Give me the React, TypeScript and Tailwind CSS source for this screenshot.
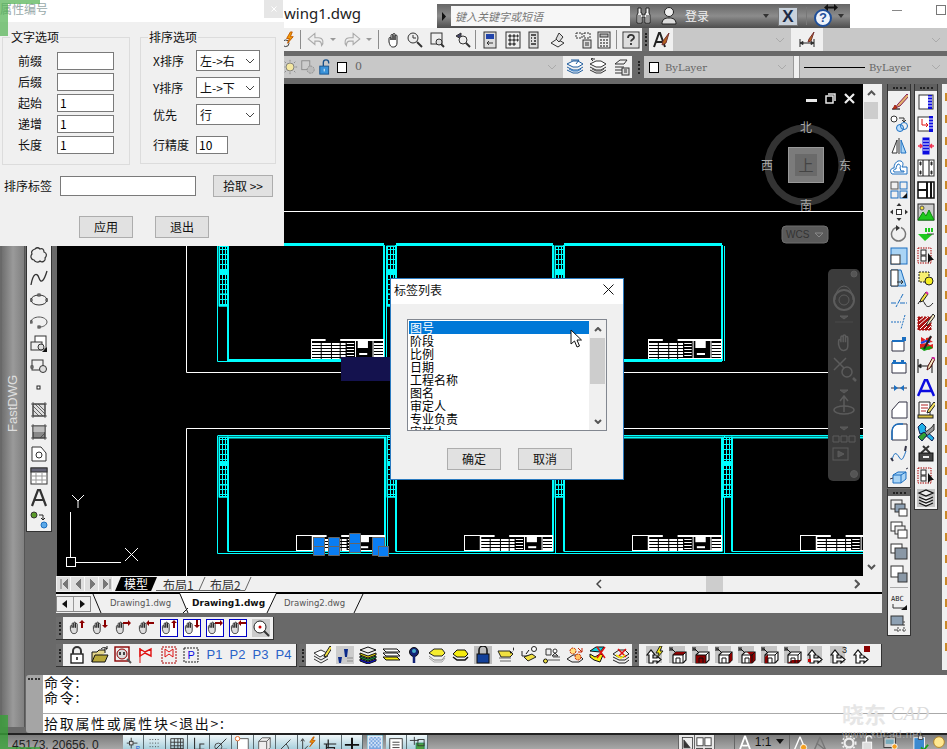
import React from 'react';

const CJK = '"Noto Sans CJK SC", sans-serif';

const hand = 'M4 11V7.5a1 1 0 0 1 2 0V9V4.5a1 1 0 0 1 2 0V9V3.5a1 1 0 0 1 2 0V9V5a1 1 0 0 1 2 0v7c0 2.500-1.500 4-3.500 4H8c-2 0-3-1-4-5z';
const arrows: Record<string, string> = { up: 'M13 9V4h-2l3-3 3 3h-2v5z', down: 'M13 1v5h-2l3 3 3-3h-2V1z', right: 'M9 3h5V1l3 3-3 3V5H9z', left: 'M17 3h-5V1L9 4l3 3V5h5z' };
const handArrow = (a: string, box = false) => (
  <>
    {box && <rect x=".5" y=".5" width="17" height="17" fill="#fff" stroke="#0000c8" />}
    <path d={hand} fill="#ddd" stroke="#222" transform="translate(-1 1) scale(.85)" />
    <path d={arrows[a]} fill="#8b0000" stroke="none" />
  </>
);
const layers = (a: string, b: string, c = '#333') => (
  <>
    <path d="M1 6l6-3h5l5 3-5 3H7z" fill={a} stroke={c} />
    <path d="M1 9l6 3h5l5-3M1 12l6 3h5l5-3" stroke={c} />
    <path d="M3 11l4 2h5l3-2" stroke={b} />
  </>
);
const cube = (patch: React.ReactNode) => (
  <>
    <rect x="0" y="0" width="16" height="17" fill="#c4c4c4" stroke="none" />
    <path d="M1 1v4M3 1v4M1 3h2M3 3l3 3" stroke="#111" />
    <path d="M4 17V9l3-3h10v8l-3 3z" fill="#fff" stroke="#111" strokeWidth="1.200" />
    {patch}
    <path d="M4 9h10v8M14 9l3-3M7 17v-5h4v5" stroke="#111" fill="none" />
  </>
);
const house = 'M3 17V9H1l4-5 4 5H7v3h4v-2l4 3.500-4 3.500v-2H7v2z';

const ICONS: Record<string, React.ReactNode> = {
  bolt: (<><circle cx="6" cy="13" r="3.500" /><path d="M11 1L7 8h3l-2 5 6-7h-3l2-5z" fill="#f59a00" stroke="#c15a00" /></>),
  undo: (<path d="M8 3L2 8l6 5v-3h3c2 0 3 1 3 4 2-2 2-7-3-7H8z" fill="#eee" stroke="#aaa" />),
  redo: (<path d="M10 3l6 5-6 5v-3H7c-2 0-3 1-3 4-2-2-2-7 3-7h3z" fill="#eee" stroke="#aaa" />),
  hand: (<path d={hand} fill="#fff" stroke="#222" />),
  zoom: (<><circle cx="7" cy="7" r="5" fill="#eee" /><path d="M7 4v3h3" /><path d="M11 11l5 5" strokeWidth="2" /></>),
  zwin: (<><rect x="2" y="2" width="11" height="11" stroke="#333" /><circle cx="10" cy="11" r="3" fill="#ddd" /><path d="M12 13l3 3" strokeWidth="2" /></>),
  zprev: (<><path d="M7 2L2 5l5 3z" fill="#446" /><circle cx="9" cy="9" r="4" fill="#eee" /><path d="M12 12l4 4" strokeWidth="2" /></>),
  prop: (<><rect x="3" y="1" width="12" height="16" fill="#ddd" /><rect x="5" y="3" width="8" height="5" fill="#24a" stroke="none" /><path d="M6 12h6M6 12l2-2M6 12l2 2" /></>),
  grid: (<><rect x="2" y="1" width="14" height="16" /><path d="M5 4h2v2H5zM9 4h2v2H9zM13 4h1v2h-1zM5 8h2v2H5zM9 8h2v2H9zM13 8h1v2h-1zM5 12h2v2H5zM9 12h2v2H9z" fill="#777" /></>),
  tools: (<><rect x="4" y="1" width="9" height="16" fill="#ddd" /><path d="M6 4h5M6 7h1M9 7h2M6 10h1M9 10h2M6 13h5" stroke="#555" strokeWidth="2" /></>),
  stamp: (<><path d="M2 12l6-4 7 4-6 4z" fill="#eee" /><path d="M7 8l3-6 4 4-4 5z" fill="#ddd" /></>),
  sheets: (<><rect x="2" y="2" width="6" height="5" strokeDasharray="2 1" /><rect x="10" y="2" width="6" height="5" strokeDasharray="2 1" /><rect x="9" y="9" width="8" height="8" fill="#ddd" /><path d="M11 12h4M11 14h4" /></>),
  calc: (<><rect x="3" y="1" width="12" height="16" fill="#eee" /><rect x="5" y="3" width="8" height="3" fill="#bbb" /><path d="M5 9h2M8 9h2M11 9h2M5 12h2M8 12h2M11 12h2M5 15h2M8 15h2M11 15h2" strokeWidth="1.500" stroke="#555" /></>),
  help: (<><rect x="1" y="1" width="16" height="16" fill="#fff" /><rect x="2" y="2" width="14" height="14" fill="#ddd" stroke="none" /><path d="M6 7c0-4 6-4 6-.500 0 2-3 2-3 4" strokeWidth="1.800" /><path d="M9 12v2" strokeWidth="1.800" /></>),
  abrush: (<><path d="M2 16L7 2h1l5 14M4 11h7" strokeWidth="2" stroke="#222" /><path d="M17 2l-6 8-1 4 4-2z" fill="#b5651d" stroke="#733" /></>),
  dimbrush: (<><path d="M2 8v8M16 8v8M2 12h14" stroke="#222" /><path d="M2 12l3-1.500v3zM16 12l-3-1.500v3z" fill="#222" /><path d="M16 1l-5 7-1 3 3-1z" fill="#b5651d" stroke="#733" /></>),
  sun: (<><circle cx="9" cy="9" r="4.500" fill="#f4e7a0" stroke="#777" /><path d="M9 1v2M9 15v2M1 9h2M15 9h2M3 3l1.500 1.500M15 3l-1.500 1.500M3 15l1.500-1.500M15 15l-1.500-1.500" stroke="#888" /></>),
  freeze: (<><rect x="2" y="2" width="9" height="10" fill="#ccc" stroke="#888" /><circle cx="12" cy="12" r="4" fill="#bbb" stroke="#888" strokeDasharray="2 1" /></>),
  unlock: (<><rect x="2" y="8" width="10" height="9" fill="#3a92d8" stroke="#15508a" /><path d="M6 8V4a3 3 0 0 1 6 0v1" stroke="#15508a" strokeWidth="1.500" /><path d="M7 11v3" stroke="#fff" /></>),
  lay1: (<>{layers('#fff', '#2a78c8', '#1c5a9c')}<path d="M5 2h8l-3 4" stroke="#1c5a9c" /></>),
  lay2: (<>{layers('#fff', '#555')}<path d="M2 1h4M2 1l2-1M2 1l2 2" /></>),
  lay3: (<><path d="M3 6l5-4h7l-3 4zM3 9h9M3 12h9M3 15h9" /><rect x="10" y="10" width="7" height="7" fill="#ddd" /><path d="M12 12h3M12 14h3" /></>),
  brush: (<><path d="M2 16h8" stroke="#444" strokeWidth="1.500" /><path d="M17 1l-9 10-3 4 5-2 9-10z" fill="#e3b26b" stroke="#825" /><path d="M5 12l-2 4 4-1z" fill="#c63d00" stroke="#922" /></>),
  copy: (<><circle cx="4" cy="4" r="3" fill="#fff" stroke="#333" /><circle cx="10" cy="13" r="3.500" fill="#bfe0ff" stroke="#1c6fc0" /><circle cx="14" cy="11" r="3.500" stroke="#1c6fc0" /><path d="M9 3h5v4M12 5l2 2 2-2" stroke="#333" /></>),
  mirror: (<><path d="M7 3L2 16h5z" fill="#fff" /><path d="M11 3l5 13h-5z" fill="#a9d4f5" stroke="#1c6fc0" /><path d="M9 1v16" /></>),
  offset: (<path d="M8 2c5-1 6 3 4 6h5v7H2c-3-3-1-6 2-6 0-4 2-6 4-7zM8 5c2 0 3 2 2 4l1 3h3v1H4c-1-2 0-3 2-3 0-2 1-4 2-5z" stroke="#1c6fc0" fill="#fff" />),
  array: (<><rect x="1" y="1" width="7" height="7" stroke="#555" /><rect x="10" y="1" width="7" height="7" stroke="#1c6fc0" /><rect x="1" y="10" width="7" height="7" stroke="#1c6fc0" /><rect x="10" y="10" width="7" height="7" stroke="#1c6fc0" /><path d="M12 17l5-5v5z" fill="#111" stroke="none" /></>),
  move: (<><rect x="6.500" y="6.500" width="5" height="5" fill="#fff" /><path d="M9 0l2.500 3h-5zM9 18l2.500-3h-5zM0 9l3-2.500v5zM18 9l-3-2.500v5z" fill="#333" stroke="none" /></>),
  rotate: (<><path d="M11 2.500a7 7 0 1 1-5 0" stroke="#777" strokeWidth="1.500" /><path d="M6 0l4 3-4 3z" fill="#333" stroke="none" /></>),
  scale: (<><rect x="1" y="1" width="16" height="16" fill="#a9d4f5" stroke="#1c6fc0" /><rect x="1" y="8" width="9" height="9" fill="#fff" stroke="#333" /></>),
  stretch: (<><path d="M1 1h10l5 16H1z" fill="#a9d4f5" stroke="#1c6fc0" /><path d="M1 1h7v16H1z" fill="#fff" stroke="#333" /><path d="M7 13h6M11 11l2 2-2 2" /></>),
  trim: (<path d="M1 12h5M10 12h7M13 3L6 16" stroke="#1c6fc0" strokeDasharray="5 1" />),
  extend: (<path d="M1 9h10M15 2l-4 14" stroke="#1c6fc0" strokeDasharray="2 1" />),
  brk1: (<><path d="M2 6h12v10H2z" fill="#fff" stroke="#334" /><path d="M2 6h12" stroke="#1c6fc0" strokeWidth="2" /><rect x="12" y="2" width="4" height="4" fill="#1c6fc0" stroke="none" /></>),
  brk2: (<><path d="M2 6h14v10H2z" fill="#fff" stroke="#334" /><path d="M2 6h14" stroke="#1c6fc0" strokeWidth="2" /><rect x="3" y="3" width="3" height="3" fill="#1c6fc0" stroke="none" /><rect x="11" y="3" width="3" height="3" fill="#1c6fc0" stroke="none" /></>),
  join: (<><path d="M1 9h16" stroke="#334" /><path d="M4 6l4 3-4 3zM14 6l-4 3 4 3z" fill="#1c6fc0" stroke="none" /></>),
  chamfer: (<path d="M2 17V9l7-8h8v16z" fill="#fff" stroke="#334" />),
  fillet: (<><path d="M2 17V9c0-5 3-8 7-8h8v16z" fill="#fff" stroke="#334" /><path d="M2 17V9c0-5 3-8 7-8h4" stroke="#1c6fc0" strokeWidth="1.500" /></>),
  blend: (<><path d="M2 15c2-8 4-8 7-3s4 2 7-6" stroke="#1c6fc0" /><path d="M1 13l2 3M16 1l-1 5" stroke="#334" strokeWidth="2" /></>),
  explode: (<><path d="M3 8l5-3h8v7l-5 4H3z" fill="#a9d4f5" stroke="#1c6fc0" /><path d="M3 8h8v8M11 8l5-3" stroke="#1c6fc0" /><path d="M0 12l3-1M16 2l2-1" stroke="#334" /></>),
  ovl1: (<><rect x="1" y="1" width="11" height="9" fill="#eee" /><rect x="5" y="5" width="10" height="8" fill="#8da0b3" /><rect x="9" y="10" width="8" height="7" fill="#fff" /></>),
  ovl2: (<><rect x="1" y="1" width="11" height="9" fill="#fff" /><rect x="5" y="5" width="10" height="8" fill="#eee" /><rect x="8" y="9" width="9" height="8" fill="#fff" /></>),
  ovl3: (<><rect x="1" y="1" width="11" height="9" fill="#fff" /><rect x="5" y="5" width="12" height="11" fill="#8a98a6" /></>),
  ovl4: (<><rect x="1" y="1" width="12" height="11" fill="#fff" /><rect x="8" y="8" width="9" height="9" fill="#8a98a6" /></>),
  abc: (<><text x="1" y="8" fontFamily="DejaVu Sans Mono" fontSize="7" fill="#222" stroke="none">ABC</text><path d="M3 11v4h11" /><path d="M11 17l6-5v5z" fill="#111" stroke="none" /></>),
  wipe: (<><rect x="1" y="1" width="12" height="9" fill="#8da0b3" /><path d="M6 15h10M14 6v11M8 12v5M4 15h3" stroke="#444" strokeDasharray="2 1" /></>),
  side: (<><rect x="2" y="2" width="14" height="14" fill="#fff" /><rect x="11" y="2" width="4" height="14" fill="#0b0be0" stroke="none" /><path d="M11 4h4M11 7h4M11 10h4M11 13h4" stroke="#fff" /></>),
  side2: (<><rect x="1" y="2" width="12" height="14" fill="#fff" /><rect x="12" y="1" width="4" height="16" fill="#0b0be0" stroke="none" /><path d="M12 4h4M12 7h4M12 10h4M12 13h4" stroke="#fff" /><path d="M5 4v6h6M9 8l2 2-2 2" stroke="#e01010" /></>),
  split: (<><rect x="6" y="1" width="6" height="16" fill="#0b0be0" stroke="#0b0be0" /><path d="M6 4h6M6 7h6M6 10h6M6 13h6" stroke="#fff" /><path d="M1 9h4M3 7l2 2-2 2M17 9h-4M15 7l-2 2 2 2" stroke="#f03050" strokeWidth="1.500" /></>),
  frame: (<><rect x="1" y="1" width="16" height="16" fill="#fff" /><path d="M6 1v16M12 1v16" stroke="#111" /><path d="M3 3h1v3H3zM14 3h1v3h-1zM3 12h1v3H3zM14 12h1v3h-1z" fill="#111" /></>),
  table: (<><rect x="1" y="1" width="16" height="16" fill="#fff" strokeWidth="1.500" stroke="#111" /><path d="M1 9h9M10 1v16M14 1v16" strokeWidth="2" stroke="#111" /></>),
  image: (<><rect x="1" y="1" width="16" height="16" fill="#ccc" stroke="#222" /><path d="M1 17l5-8 3 4 3-6 5 10z" fill="#1ec81e" stroke="#0a8a0a" /><circle cx="5" cy="5" r="2" fill="#f5e040" stroke="#555" /></>),
  greenv: (<><path d="M1 9h15L8 16z" fill="#1ec81e" stroke="none" /><path d="M9 3v4M12 3v4M15 3v4" stroke="#1ec81e" strokeWidth="2" /><path d="M10 9h7" stroke="#444" /></>),
  select: (<><rect x="1" y="1" width="13" height="15" strokeDasharray="1.500 1" stroke="#a00" /><rect x="4" y="3" width="5" height="5" fill="#fff" stroke="#222" /><rect x="4" y="9" width="5" height="5" fill="#fff" stroke="#222" /><path d="M11 6v10l3-3h3z" fill="#111" stroke="none" /></>),
  hatchc: (<><rect x="2" y="3" width="10" height="10" fill="#f6ee70" stroke="#222" strokeDasharray="2 1" /><circle cx="12" cy="12" r="4" fill="#f6ee20" stroke="#222" /></>),
  pencurve: (<><path d="M1 13c3-6 5-4 7 0s5 3 8-1" stroke="#222" /><path d="M9 1L4 8l-1 3 3-1 5-7z" fill="#f4e040" stroke="#222" /><path d="M9 1l2 2" stroke="#e020a0" strokeWidth="2" /></>),
  hatchp: (<><rect x="1" y="4" width="13" height="13" fill="#a11" stroke="#a11" strokeDasharray="2 1" /><path d="M2 8l5-4M2 12l9-8M3 16l11-11M7 16l7-7M11 16l3-3" stroke="#fff" /><path d="M16 1l-6 9v3l2-2 6-8z" fill="#f4e7c0" stroke="#222" /></>),
  flagc: (<><path d="M4 2l5 3-5 2zM9 3l6-1-2 3 3 2-7 1zM3 9l7-1 3 2 3-1v4l-4 2-5-2-4 1z" fill="#e02020" stroke="none" /><path d="M3 13l10-2 3 2-9 3z" fill="#10a010" stroke="none" /><path d="M4 8l5-2 4 1" stroke="#2040e0" strokeWidth="2" /><path d="M14 1L7 14" stroke="#222" strokeWidth="2" /></>),
  dimp: (<><path d="M1 2v14M15 2v14M1 9h14" stroke="#111" /><path d="M1 9l3-2v4zM15 9l-3-2v4z" fill="#111" /><path d="M16 0l-5 9-1 4 3-2 5-9z" fill="#f4e7c0" stroke="#511" /><path d="M15 0l3 2" stroke="#d020a0" strokeWidth="2" /></>),
  bigA: (<path d="M1 17L8 1h2l7 16M4 12h10" stroke="#0b0be0" strokeWidth="2.500" />),
  notes: (<><path d="M2 1h11v14H2z" fill="#fff" stroke="#222" /><path d="M4 4h7M4 7h7M4 10h5" stroke="#b02020" /><path d="M17 1l-6 8-1 3 3-1 6-8z" fill="#f4e060" stroke="#222" /><rect x="1" y="14" width="15" height="3" fill="#d8c040" stroke="#222" /></>),
  wrench: (<><path d="M1 4l4-4 4 4-1 3 9 8-2 3-9-8-3 1z" fill="#20b0e8" stroke="#125" /><path d="M17 1l-2 3-10 8 2 3 10-8z" fill="#999" stroke="#333" /><path d="M1 14l6-5 3 3-5 6z" fill="#30a030" stroke="#125" /></>),
  kit: (<><path d="M4 8l8-7M13 8L6 1" stroke="#333" strokeWidth="2" /><rect x="2" y="8" width="14" height="8" fill="#444" stroke="#111" /><rect x="6" y="11" width="6" height="2" fill="#eee" stroke="none" /></>),
  stack: (<><rect x="0" y="0" width="18" height="18" fill="#c4c4c4" stroke="none" /><path d="M2 4l7-3 7 3-7 3zM2 8l7 3 7-3M2 11l7 3 7-3M2 14l7 3 7-3" fill="#eee" stroke="#111" strokeWidth="1.300" /></>),
  lock: (<><rect x="3" y="8" width="12" height="9" fill="#fff" stroke="#111" strokeWidth="1.300" /><path d="M5 8V5a4 4 0 0 1 8 0v3" strokeWidth="2" /><path d="M9 11v3" stroke="#111" strokeWidth="1.500" /></>),
  folder: (<><path d="M1 16V6h5l2-2h6v3" fill="#e3d58a" stroke="#111" /><path d="M1 16l3-7h13l-3 7z" fill="#b8a83a" stroke="#111" /><path d="M10 3c2-2 5-2 6 0M16 0v3h-3" stroke="#111" /></>),
  camera: (<><rect x="1" y="1" width="14" height="14" fill="#eee" stroke="#8b0000" strokeWidth="1.400" /><circle cx="8" cy="8" r="5" fill="#ddd" stroke="#8b0000" /><path d="M6 6v3M10 6v3" stroke="#111" strokeWidth="1.500" /><path d="M13 13l4 4" stroke="#555" strokeWidth="2" /></>),
  flag1: (<><path d="M3 17V2" stroke="#e01010" /><path d="M3 3l5 3 6-3v7l-6-3-5 3z" fill="none" stroke="#e01010" strokeWidth="1.400" /></>),
  flag2: (<><rect x="2" y="1" width="14" height="16" strokeDasharray="2 1" stroke="#a00" /><path d="M5 3l4 3 4-3v8l-4-3-4 3z" stroke="#e01010" /></>),
  ptbox: (<><rect x="1" y="2" width="14" height="14" strokeDasharray="2 1" stroke="#222" /><text x="4.500" y="13" fontFamily="Liberation Sans" fontSize="11" fill="#0b0be0" stroke="none">P</text></>),
  zoompt: (<><rect x="0" y="0" width="18" height="18" fill="#ccc" stroke="none" /><circle cx="8" cy="8" r="6" fill="#fff" stroke="#222" /><circle cx="8" cy="8" r="1.500" fill="#c00" stroke="none" /><path d="M12 12l5 5" strokeWidth="2" /></>),
  note: (<><path d="M1 7l7-3 6 3-7 4z" fill="#fff" /><path d="M1 10l7 4 7-4M1 13l7 4 7-4" /><path d="M17 0l-5 8-1 3 3-1 5-8z" fill="#f2e040" stroke="#222" /></>),
  walk: (<><rect x="0" y="0" width="18" height="18" fill="#ccc" stroke="none" /><path d="M2 11h4l-1 6H3zM8 3h4l-1 8H9z" fill="#0b2a8a" stroke="none" /><path d="M11 12h6M11 15h6" stroke="#888" /></>),
  rainbow: (<><path d="M1 4l8-3 8 3-8 3z" fill="#eee" stroke="#111" /><path d="M1 7l8 3 8-3v2l-8 3-8-3z" fill="#e6d500" stroke="#111" /><path d="M1 10l8 3 8-3v2l-8 3-8-3z" fill="#10a040" stroke="#111" /><path d="M1 13l8 3 8-3v2l-8 3-8-3z" fill="#0b0be0" stroke="#111" /></>),
  yel: (<><path d="M1 3h14l3 3H4zM1 7h14l3 3H4z" fill="#fff" stroke="#111" /><path d="M1 11h14l3 3H4z" fill="#f5ec10" stroke="#111" /></>),
  bulb: (<><circle cx="9" cy="6" r="4.500" fill="#127" stroke="#111" /><path d="M9 10v7" stroke="#127" strokeWidth="2.500" /><circle cx="9" cy="5" r="2" fill="#4ac" stroke="none" /></>),
  yel2: (<><path d="M1 7l5-4h8l3 4-3 3H6z" fill="#f5ec30" stroke="#222" /><path d="M1 10l5 4h8l3-4" stroke="#888" /><path d="M1 12l5 4h8l3-4" stroke="#aaa" /></>),
  yel3: (<><path d="M2 8l4-4h8l3 4-3 3H6z" fill="#f5ec10" stroke="#111" /><path d="M2 11l4 3h8l3-3" stroke="#111" strokeWidth="1.500" /></>),
  laylock: (<><rect x="0" y="0" width="18" height="18" fill="#bdbdbd" stroke="none" /><rect x="3" y="8" width="12" height="9" fill="#12409a" stroke="#111" /><path d="M5 8V4a4 4 0 0 1 8 0v4" stroke="#111" strokeWidth="1.500" /></>),
  laypen: (<><path d="M1 5h12l3 3-3 3H4z" fill="#f0e040" stroke="#222" /><path d="M2 12h12M3 15h11" stroke="#666" /><path d="M16 1a2 2 0 1 1-4 4l2 3 2-3z" fill="#111" stroke="none" /></>),
  layswap: (<><path d="M2 5v5h10" stroke="#222" /><path d="M4 11l8-3 4 3-8 4z" fill="#f0e040" stroke="#222" /><circle cx="14" cy="3" r="2.500" fill="#fff" stroke="#222" /><path d="M9 4l-3 4" stroke="#111" /></>),
  layp: (<><path d="M3 3h5v6H3z" fill="none" /><circle cx="2.500" cy="15" r="2" fill="#f0e040" stroke="#111" /><path d="M5 14h12M10 11h7" stroke="#555" /><circle cx="12" cy="5" r="2" fill="#fff" stroke="#333" /><path d="M9 10l3-3 3 3z" fill="#ccc" /></>),
  laysun: (<><path d="M1 13l6-4h6l4 4-4 3H6z" fill="#eee" stroke="#222" /><circle cx="7" cy="5" r="3" fill="#ffe080" stroke="#c02000" strokeDasharray="2 1" /><circle cx="12" cy="11" r="3" fill="#ffc060" stroke="#c02000" strokeDasharray="2 1" /><path d="M12 2l4 4M16 2v4h-4" stroke="#c02000" /></>),
  layx: (<><path d="M1 5l6-4h8L11 6z" fill="#10d0e0" stroke="#111" /><path d="M1 8l5 3 5-3 3 1-3 7-6-2-4-3z" fill="#f5ec10" stroke="#111" /><path d="M8 1l8 11M16 1L8 12" stroke="#e01010" strokeWidth="1.500" /></>),
  layx2: (<><path d="M1 8l6-4h6l4 4-5 3H6zM1 11l6 3h6l4-3M1 14l6 3h6l4-3" fill="#eee" stroke="#222" /><path d="M6 3l8 8M14 3l-8 8" stroke="#e01010" strokeWidth="1.500" /><path d="M4 9l5 3 4-3" stroke="#f5ec10" strokeWidth="1.500" /></>),
  bq: (<><rect x="0" y="0" width="16" height="17" fill="#c4c4c4" stroke="none" /><path d={house} fill="#fff" stroke="#111" strokeWidth="1.200" /><path d="M14 0l-4 7h3l-2 5 6-7h-3l2-5z" fill="#f5ec10" stroke="#222" /></>),
  b1: cube(<path d="M4 9l3-3h10l-3 3z" fill="#8b0000" stroke="none" />),
  b2: cube(<rect x="4" y="9" width="10" height="8" fill="#8b0000" stroke="none" />),
  b3: cube(<path d="M14 9l3-3v8l-3 3z" fill="#8b0000" stroke="none" />),
  b4: cube(<path d="M9 6h8v8l-3 3h-2V9z" fill="#8b0000" stroke="none" />),
  b5: cube(<path d="M4 17v-6l3-3v9z" fill="#8b0000" stroke="none" />),
  b6: cube(<path d="M4 17h10l3-3H8z" fill="#8b0000" stroke="none" />),
  b7: (<><rect x="0" y="0" width="15" height="17" fill="#c4c4c4" stroke="none" /><path d={house} fill="#fff" stroke="#111" strokeWidth="1.200" /><rect x="1" y="13" width="3" height="3" fill="#c00" stroke="none" /></>),
  b8: (<><rect x="0" y="0" width="15" height="17" fill="#c4c4c4" stroke="none" /><path d={house} fill="#fff" stroke="#111" strokeWidth="1.200" /><text x="12" y="7" fontFamily="Liberation Sans" fontSize="9" fill="#111" stroke="none">3</text></>),
  b9: (<><path d={house} fill="#fff" stroke="#111" strokeWidth="1.200" /><rect x="11" y="0" width="6" height="6" fill="#8b0000" stroke="none" /></>),
  cloud: (<path d="M5 2c2-2 4-1 5 0 2-1 4 0 4 3 3 1 3 4 1 6 1 3-3 5-5 3-2 2-5 1-6-1-3 0-4-4-2-6-1-2 0-4 3-5z" fill="#eee" stroke="#333" strokeWidth="1.200" />),
  spline: (<path d="M1 16C3 4 7 3 9 9s5 3 8-7" stroke="#333" strokeWidth="1.300" />),
  ellipse: (<><ellipse cx="9" cy="9" rx="8" ry="5" /><rect x="0" y="8" width="2" height="2" fill="#fff" /><rect x="8" y="3" width="2" height="2" fill="#fff" /><rect x="16" y="8" width="2" height="2" fill="#fff" /></>),
  earc: (<><path d="M1 9c0-3 4-5 8-5s8 2 8 5-4 5-7 5" stroke="#555" /><rect x="0" y="8" width="2" height="2" fill="#fff" /><rect x="8" y="13" width="2" height="2" fill="#fff" /></>),
  block: (<><rect x="5" y="1" width="11" height="13" fill="#fff" /><rect x="1" y="7" width="11" height="8" fill="#eee" /><circle cx="11" cy="12" r="3" fill="#ddd" /><path d="M12 17l5-5v5z" fill="#111" stroke="none" /></>),
  rcirc: (<><rect x="2" y="3" width="11" height="10" /><circle cx="13" cy="12" r="3.500" fill="#ddd" /><rect x="1" y="9" width="2" height="2" fill="#fff" /></>),
  point: (<rect x="7" y="7" width="3" height="3" fill="#fff" stroke="#222" />),
  hatch: (<><rect x="3" y="3" width="12" height="12" fill="#ddd" /><path d="M5 3l10 10M3 5l10 10M8 3l7 7M3 9l6 6M1 3h16M1 15h16M3 1v16M15 1v16" stroke="#444" strokeWidth=".8" /></>),
  gradient: (<><rect x="3" y="3" width="12" height="12" fill="#888" /><rect x="3" y="3" width="12" height="6" fill="#bbb" stroke="none" /><path d="M1 3h16M1 15h16M3 1v16M15 1v16M10 15l5-5" stroke="#444" strokeWidth=".8" /></>),
  region: (<><path d="M2 2h9l5 6v8H2z" fill="#fff" /><circle cx="9" cy="10" r="3" /></>),
  tbl: (<><rect x="1" y="1" width="16" height="16" fill="#fff" /><rect x="1" y="1" width="16" height="4" fill="#667" /><path d="M1 9h16M1 13h16M6 5v12M12 5v12" stroke="#999" /></>),
  A: (<path d="M2 17L8 1h2l6 16M5 11h8" stroke="#333" strokeWidth="2.200" />),
  addsel: (<><circle cx="4" cy="4" r="3" fill="#5a9a2a" stroke="#333" /><circle cx="14" cy="14" r="3" fill="#5aa8e8" stroke="#1c6fc0" /><path d="M9 4h4v5M11 7l2 2 2-2" stroke="#222" /></>),
  snap: (<><path d="M2 8h12M7 2v12" stroke="#333" /><rect x="5" y="6" width="4" height="4" fill="#ddd" stroke="#333" /><text x="12" y="16" fontFamily="Liberation Sans" fontSize="7" fill="#15c" stroke="none">P</text></>),
  dots: (<path d="M3 4h12M3 8h12M3 12h12M3 16h12" stroke="#333" strokeDasharray="1 2" />),
  sgrid: (<path d="M2 3h14v14H2zM2 7h14M2 11h14M2 14h14M6 3v14M10 3v14M13 3v14" stroke="#333" />),
  ortho: (<path d="M4 2v13h11M10 15V9h5" stroke="#333" strokeWidth="1.200" />),
  polar: (<><circle cx="6" cy="12" r="4" stroke="#444" /><path d="M3 15L15 3M3 15h13" stroke="#222" /></>),
  osnap: (<><rect x="4" y="3" width="12" height="14" fill="#fff" stroke="#555" /><circle cx="4" cy="3" r="2.500" fill="#fff" stroke="#e06020" /></>),
  cube: (<><path d="M3 6l4-4h9v11l-4 4H3z" fill="#eee" stroke="#555" /><path d="M3 6h9v11M12 6l4-4" stroke="#555" /></>),
  angle: (<path d="M2 16L14 4M2 16h14M9 9c2 2 3 4 3 7" stroke="#333" />),
  dyn: (<><path d="M3 17V4M1 6l2-3 2 3M3 17l6-6" stroke="#333" /><path d="M15 1l-4 6h3l-3 5 6-7h-3l2-4z" fill="#f59a00" stroke="#c15a00" /></>),
  tplus: (<path d="M2 9h14M5 9v7h9v-3H5M7 4v10" stroke="#222" strokeWidth="1.400" />),
  plus: (<path d="M1 10h16M9 2v15" stroke="#111" strokeWidth="2.200" />),
  check: (<><rect x="0" y="0" width="18" height="18" fill="#fff" stroke="#28a" /><rect x="2" y="2" width="14" height="14" fill="#7aa7e0" stroke="none" /><path d="M2 2h2v2H2zM6 2h2v2H6zM10 2h2v2h-2zM14 2h2v2h-2zM4 4h2v2H4zM8 4h2v2H8zM12 4h2v2h-2zM2 6h2v2H2zM6 6h2v2H6zM10 6h2v2h-2zM14 6h2v2h-2zM4 8h2v2H4zM8 8h2v2H8zM12 8h2v2h-2zM2 10h2v2H2zM6 10h2v2H6zM10 10h2v2h-2zM14 10h2v2h-2zM4 12h2v2H4zM8 12h2v2H8zM12 12h2v2h-2z" fill="#cfe0f5" stroke="none" /></>),
  sheet: (<><rect x="2" y="3" width="14" height="14" fill="#fff" stroke="#333" /><path d="M5 7h8M5 10h8M5 13h8" stroke="#333" /></>),
  plusg: (<><path d="M6 1v9M1 5h10" stroke="#333" /><rect x="8" y="8" width="9" height="9" fill="#4aa040" stroke="#285" /><rect x="10" y="4" width="7" height="7" stroke="#333" /></>),
  paper: (<><rect x="3" y="2" width="13" height="15" fill="#eee" stroke="#333" /><path d="M5 5l8 10H5z" fill="#333" stroke="#333" /></>),
  view2: (<><rect x="1" y="2" width="7" height="9" fill="#fff" stroke="#333" /><rect x="10" y="2" width="7" height="9" fill="#fff" stroke="#333" /><path d="M0 14h8M10 14h8" stroke="#333" /></>),
  anno: (<path d="M9 1L3 17M9 1l6 16M6 12h6" stroke="#fff" strokeWidth="2" />),
  anno2: (<><path d="M9 2L3 16M9 2l6 14" stroke="#fff" strokeWidth="1.600" /><circle cx="13" cy="14" r="3.500" fill="#f5a020" stroke="#fff" /></>),
  anno3: (<path d="M9 2L3 16M9 2l6 14M5 9l9 7" stroke="#777" strokeWidth="1.600" />),
  gear: (<><circle cx="9" cy="9" r="5" fill="none" stroke="#eee" strokeWidth="2.500" /><circle cx="9" cy="9" r="7.500" stroke="#eee" strokeDasharray="2 2.500" strokeWidth="2" /></>),
  lock2: (<><rect x="2" y="8" width="10" height="9" fill="#ddd" stroke="#fff" /><path d="M6 8V4a3 3 0 0 1 6 0" stroke="#fff" strokeWidth="1.600" /></>),
  hw: (<><rect x="1" y="3" width="13" height="11" fill="#ccc" stroke="#333" /><rect x="3" y="5" width="9" height="5" fill="#7ab" stroke="none" /><circle cx="13" cy="13" r="3" fill="#f5a020" stroke="#fff" /></>),
  iso: (<><rect x="1" y="3" width="12" height="14" fill="#3a8ad0" stroke="#fff" /><path d="M6 1h5v4H6z" fill="#eee" /><path d="M9 14l3 3 5-6" stroke="#18a018" strokeWidth="2" /></>),
  bulby: (<circle cx="9" cy="8" r="6" fill="#ffe890" stroke="#b08020" />),
};

function Ico({ n, size = 18 }: { n: string; size?: number }) {
  return (
    <svg width={size} height={size} viewBox="0 0 18 18" fill="none" stroke="#333" className="block shrink-0">
      {ICONS[n]}
    </svg>
  );
}

function Chevron({ color = '#aaa' }: { color?: string }) {
  return (
    <svg width="10" height="6" viewBox="0 0 10 6" fill="none" stroke={color} strokeWidth="1" className="shrink-0">
      <path d="M1 1l4 4 4-4" />
    </svg>
  );
}

function Sep() {
  return <div className="w-px h-[19px] bg-[#8c8c8c] mx-[3px] shrink-0" />;
}

function Handle() {
  return (
    <div className="w-[7px] h-full bg-[#6e6e6e] flex items-center justify-center shrink-0">
      <div className="w-[2px] h-[13px] border-l-2 border-dotted border-[#222]" />
    </div>
  );
}

function Drop({ className, children }: { className: string; children?: React.ReactNode }) {
  return (
    <div className={`h-full bg-[#c8c8c8] flex items-center pr-[6px] ${className}`}>
      <div className="flex-1 flex items-center min-w-0">{children}</div>
      <Chevron />
    </div>
  );
}

function TitleBar() {
  return (
    <div className="h-[28px] bg-white flex items-start shrink-0 pl-[284px]">
      <div className="w-[153px] pt-[3px] text-[15px] leading-[20px] text-[#222] [font-family:'Noto_Sans',sans-serif]">wing1.dwg</div>
      <div className="relative mt-[4px] w-[413px] h-[24px] bg-gradient-to-b from-[#666666] via-[#8c8c8c] to-[#4e4e4e] flex items-center text-[#eee]">
        <div className="w-[14px] flex justify-center">
          <svg width="6" height="9" viewBox="0 0 6 9"><path d="M1 0l4 4.500-4 4.500z" fill="#111" /></svg>
        </div>
        <div className="w-[179px] h-[20px] bg-[#f7f7f7] pl-[4px] text-[#777] italic text-[11px] leading-[20px] [font-family:'Noto_Sans_CJK_SC',sans-serif]">键入关键字或短语</div>
        <div className="ml-[5px] w-[16px]">
          <svg width="17" height="18" viewBox="0 0 17 18"><path d="M3 1h3v5h1v2h3V6h1V1h3v5l1 2v8h-5V10H7v6H2V8l1-2z" fill="#eee" stroke="#222" /><path d="M3 8h3v7H3zM11 8h3v7h-3z" fill="#999" /></svg>
        </div>
        <div className="ml-[9px] w-[16px]">
          <svg width="18" height="20" viewBox="0 0 18 20"><circle cx="9" cy="6" r="4.500" fill="#eee" stroke="#222" /><path d="M2 18c0-5 3-6 7-6s7 1 7 6z" fill="#ddd" stroke="#222" /></svg>
        </div>
        <div className="ml-[9px] w-[78px] text-[12px] [font-family:'Noto_Sans_CJK_SC',sans-serif]">登录</div>
        <svg width="6" height="4" viewBox="0 0 6 4"><path d="M0 0h6L3 4z" fill="#333" /></svg>
        <div className="ml-[9px] w-[20px] h-[19px] bg-[#c9d2dc] border border-[#777] text-[#1c2a44] text-[17px] leading-[17px] font-bold text-center [font-family:'Liberation_Sans',sans-serif]">X</div>
        <div className="ml-[8px] w-px h-[18px] bg-[#777]" />
        <div className="ml-[7px] w-[18px] h-[18px] mt-[3px] rounded-full bg-[#eef3fa] border-2 border-[#1f4f9a] text-[#1f4f9a] text-[13px] leading-[14px] font-bold text-center [font-family:'Liberation_Sans',sans-serif]">?</div>
        <svg className="ml-[6px]" width="6" height="4" viewBox="0 0 6 4"><path d="M0 0h6L3 4z" fill="#333" /></svg>
        <svg className="absolute left-[387px] top-0" width="14" height="7" viewBox="0 0 14 7" fill="#111"><path d="M0 3.500L4 0v2.500h6V0l4 3.500L10 7V4.500H4V7z" /></svg>
      </div>
      <div className="ml-[42px] mt-[10px] w-[10px] h-px bg-[#888]" />
      <div className="ml-[34px] mt-[5px] w-[10px] h-[10px] border border-[#777] shrink-0" />
    </div>
  );
}

function ToolRow1() {
  return (
    <div className="h-[23px] shrink-0 pl-[284px] flex items-center bg-[#f0f0f0]">
      <div className="w-[13px] overflow-hidden flex justify-end"><Ico n="bolt" size={17} /></div>
      <Sep />
      <div className="w-[2px]" />
      <Ico n="undo" size={20} />
      <div className="w-[14px] flex justify-center"><svg width="6" height="3" viewBox="0 0 6 3"><path d="M0 0h6L3 3z" fill="#999" /></svg></div>
      <div className="w-[2px]" />
      <Ico n="redo" size={20} />
      <div className="w-[13px] flex justify-center"><svg width="6" height="3" viewBox="0 0 6 3"><path d="M0 0h6L3 3z" fill="#999" /></svg></div>
      <Sep />
      <div className="w-[3px]" />
      <Ico n="hand" />
      <div className="w-[3px]" />
      <Ico n="zoom" />
      <div className="w-[5px]" />
      <Ico n="zwin" />
      <div className="w-[7px]" />
      <Ico n="zprev" />
      <Sep />
      <div className="w-[2px]" />
      <Ico n="prop" />
      <div className="w-[5px]" />
      <Ico n="grid" />
      <div className="w-[3px]" />
      <Ico n="tools" />
      <div className="w-[6px]" />
      <Ico n="stamp" />
      <div className="w-[7px]" />
      <Ico n="sheets" />
      <div className="w-[3px]" />
      <Ico n="calc" />
      <Sep />
      <div className="w-[2px]" />
      <Ico n="help" />
      <div className="w-[2px]" />
      <Handle />
      <div className="w-[24px] flex justify-center"><Ico n="abrush" /></div>
      <Drop className="w-[118px]" />
      <div className="w-[32px] flex justify-center"><Ico n="dimbrush" /></div>
      <Drop className="flex-1" />
    </div>
  );
}

function ToolRow2() {
  return (
    <div className="h-[22px] shrink-0 ml-[284px] flex items-center bg-[#f0f0f0]">
      <Drop className="w-[279px]">
        <div className="ml-[-2px]"><Ico n="sun" size={16} /></div>
        <div className="ml-[2px]"><Ico n="freeze" size={16} /></div>
        <div className="ml-[2px]"><Ico n="unlock" size={16} /></div>
        <div className="ml-[3px] w-[10px] h-[11px] bg-white border border-black" />
        <span className="ml-[8px] text-[11px] text-[#666] [font-family:'DejaVu_Serif',serif]">0</span>
      </Drop>
      <div className="w-[23px] flex justify-center"><Ico n="lay1" /></div>
      <div className="w-[23px] flex justify-center"><Ico n="lay2" /></div>
      <div className="w-[23px] flex justify-center"><Ico n="lay3" /></div>
      <div className="w-[1px] h-full bg-[#696969]" />
      <div className="w-[11px] h-full bg-[#696969] flex justify-center items-center"><div className="w-[2px] h-[13px] border-l-2 border-dotted border-[#222]" /></div>
      <Drop className="w-[149px]">
        <div className="ml-[5px] w-[10px] h-[11px] bg-white border border-black" />
        <span className="ml-[6px] text-[10px] text-[#666] [font-family:'DejaVu_Serif',serif]">ByLayer</span>
      </Drop>
      <div className="w-[7px] h-full bg-[#f0f0f0] border-x border-[#999]" />
      <Drop className="flex-1">
        <div className="ml-[4px] w-[61px] h-px bg-black" />
        <span className="ml-[4px] text-[10px] text-[#666] [font-family:'DejaVu_Serif',serif]">ByLayer</span>
      </Drop>
    </div>
  );
}

const TOP_INNER = [[228, 156], [396, 157], [564, 158]];
const BOTTOM_INNER = [[228, 157], [396, 157], [564, 158], [732, 140]];
const CYAN = '#00ffff';

function TitleBlock({ x, y, w, h, box = 0 }: { x: number; y: number; w: number; h: number; box?: number }) {
  const t = x + box;
  const tw = w - box;
  return (
    <g>
      <rect x={x + 0.5} y={y + 0.5} width={w - 1} height={h - 1} fill="#000" stroke="#fff" />
      {box > 0 && <path d={`M${t + 0.5} ${y}v${h}`} stroke="#fff" strokeWidth="1.500" />}
      <rect x={t} y={y} width={tw} height={2} fill="#fff" />
      <rect x={t + tw * 0.2} y={y} width={tw * 0.2} height={2} fill="#000" />
      {[4, 7, 10, 13, 16].filter((r) => r < h - 1).map((r) => (
        <g key={r} fill="#fff">
          <rect x={t + 1} y={y + r} width={tw * 0.46} height={2} />
          <rect x={t + tw * 0.49} y={y + r} width={tw * 0.1} height={1} />
          <rect x={t + tw * 0.86} y={y + r} width={tw * 0.14} height={2} />
        </g>
      ))}
      <path d={`M${t + tw * 0.14} ${y + 3}v${h - 3}M${t + tw * 0.28} ${y + 3}v${h - 3}M${t + tw * 0.4} ${y + 3}v${h - 3}`} stroke="#000" />
      <path d={`M${t + tw * 0.61} ${y}v${h}M${t + tw * 0.85} ${y}v${h}`} stroke="#fff" />
      <rect x={t + tw * 0.64} y={y} width={tw * 0.14} height={h * 0.45} fill="#fff" />
      <rect x={t + tw * 0.66} y={y + h * 0.7} width={tw * 0.11} height={2} fill="#fff" />
    </g>
  );
}

function Strip({ x, y }: { x: number; y: number }) {
  return (
    <g>
      <rect x={x} y={y} width="9" height="60" fill="url(#strip)" />
      <rect x={x + 0.5} y={y + 48} width="8" height="12" fill="none" stroke={CYAN} />
      <rect x={x + 0.5} y={y + 24} width="8" height="5" fill={CYAN} stroke="none" />
      <rect x={x + 0.5} y={y + 0.5} width="8" height="59" fill="none" stroke={CYAN} />
    </g>
  );
}

function Canvas() {
  return (
    <div className="relative w-[806px] h-[492px] bg-black shrink-0 overflow-hidden">
      <svg width="806" height="492" viewBox="57 84 806 492" className="block">
        <defs>
          <pattern id="strip" width="3" height="5" patternUnits="userSpaceOnUse">
            <rect width="3" height="5" fill="#000" />
            <path d="M.5 0v5M0 4.500h3" stroke={CYAN} strokeWidth="1" />
          </pattern>
        </defs>
        <g stroke="#fff" fill="none">
          <path d="M57 211.500H863M186.500 246V372.500H860M186.500 576V428.500H863" />
        </g>
        <g fill="none" stroke={CYAN}>
          <path d="M217.500 246V361.500H722" strokeWidth="1" />
          {TOP_INNER.map(([x, w]) => (
            <g key={x}>
              <path d={`M${x} 245V360H${x + w}V245`} strokeWidth="2" />
              <path d={`M${x} 244.500H${x + w}`} strokeWidth="3" />
              <path d={`M${x + w + 2.5} 246V361`} strokeWidth="1" />
              <Strip x={x - 9} y={246} />
            </g>
          ))}
          <path d="M217.500 435.500V553.500H863M218 435.500H863" strokeWidth="1" />
          {BOTTOM_INNER.map(([x, w]) => (
            <g key={x}>
              <path d={`M${x} 551.500V437.500H${x + w}V551.500`} strokeWidth="2" />
              <path d={`M${x} 551.500H${x + w}`} strokeWidth="1" />
              <path d={`M${x + w + 2.5} 435V553`} strokeWidth="1" />
              <Strip x={x - 9} y={437} />
            </g>
          ))}
        </g>
        <TitleBlock x={311} y={339} w={73} h={20} />
        <TitleBlock x={480} y={339} w={73} h={20} />
        <TitleBlock x={648} y={339} w={74} h={20} />
        <TitleBlock x={296} y={535} w={89} h={16} box={16} />
        <TitleBlock x={464} y={535} w={89} h={16} box={16} />
        <TitleBlock x={632} y={535} w={90} h={16} box={16} />
        <TitleBlock x={800} y={535} w={90} h={16} box={16} />
        <rect x="341" y="357" width="49" height="24" fill="#14124e" />
        <g fill="#0a7df2" stroke="#666">
          <path d="M313.500 537.500h11v18h-11zM313.500 546.500h11M328.500 537.500h11v18h-11zM328.500 546.500h11M349.500 533.500h11v19h-11zM349.500 543.500h11M372.500 537.500h12v18h-12z" />
          <rect x="378.500" y="546.500" width="10" height="10" />
        </g>
        <g stroke="#fff" fill="none">
          <rect x="66.500" y="557.500" width="9" height="9" />
          <path d="M70.500 512V557M76 562.500H121" />
          <path d="M72 495l6 6 6-6M78 501v7M125 548l13 13M138 548l-13 13" />
        </g>
        <g>
          <circle cx="805" cy="165" r="37" fill="none" stroke="#333" strokeWidth="7" />
          <rect x="788.500" y="147.500" width="35" height="35" fill="#7b7b7b" stroke="#999" />
          <rect x="795" y="154" width="22" height="22" fill="#6a6a6a" />
          <g fontFamily={CJK} fontSize="12" fill="#a8a8a8" textAnchor="middle">
            <text x="806" y="171" fontSize="15" fill="#444">上</text>
            <text x="806" y="132">北</text>
            <text x="806" y="210">南</text>
            <text x="767" y="170">西</text>
            <text x="845" y="170">东</text>
          </g>
          <rect x="782" y="226" width="46" height="17" rx="4" fill="#5a5a5a" stroke="#6f6f6f" />
          <text x="786" y="238" fontFamily="Liberation Sans" fontSize="10" fill="#333">WCS</text>
          <path d="M815 233h8l-4 4z" fill="none" stroke="#888" />
        </g>
        <g>
          <rect x="828" y="269" width="32" height="212" rx="5" fill="#3b3b3b" />
          <g fill="none" stroke="#5c5c5c">
            <circle cx="854" cy="274" r="3" fill="#555" />
            <circle cx="844" cy="300" r="10" strokeWidth="2" />
            <circle cx="844" cy="300" r="5" />
            <path d="M835 300a9 14 0 0 1 18 0" />
            <path d="M835 322h18" stroke="#4a4a4a" />
            <path d="M840 316l4 3 4-3z" fill="#555" />
            <path d={hand} transform="translate(834 332) scale(1.150)" strokeWidth="1.300" />
            <path d="M834 358l10 10M846 358l-12 12" strokeWidth="1.500" />
            <circle cx="847" cy="372" r="5" strokeWidth="1.500" />
            <path d="M853 378l3 3" strokeWidth="2.500" />
            <path d="M840 390l4 3 4-3z" fill="#555" />
            <path d="M844 396v16M840 401l4-5 4 5" strokeWidth="1.500" />
            <ellipse cx="844" cy="410" rx="10" ry="4" strokeWidth="1.500" />
            <path d="M840 427l4 3 4-3z" fill="#555" />
            <path d="M833 436h6v6h-6zM841 436h6v6h-6zM849 436h6v6h-6z" />
            <rect x="833" y="448" width="15" height="12" />
            <path d="M838 451l6 3-6 3z" fill="#555" />
            <circle cx="854" cy="474" r="3.500" fill="#555" />
          </g>
        </g>
      </svg>
      <div className="absolute right-[8px] top-[9px] flex items-center gap-[8px]">
        <div className="w-[11px] h-[3px] bg-[#e8e8e8] mt-[4px]" />
        <svg width="11" height="11" viewBox="0 0 11 11" fill="none" stroke="#e8e8e8" strokeWidth="1.500"><rect x="1" y="3" width="7" height="7" /><path d="M3 1h7v7" /></svg>
        <svg width="11" height="11" viewBox="0 0 11 11" fill="none" stroke="#eee" strokeWidth="2.200"><path d="M1 1l9 9M10 1l-9 9" /></svg>
      </div>
    </div>
  );
}

function VScroll() {
  return (
    <div className="w-[17px] h-[492px] bg-[#f0f0f0] flex flex-col items-center shrink-0">
      <div className="h-[18px] flex items-center"><svg width="9" height="6" viewBox="0 0 9 6" fill="none" stroke="#555" strokeWidth="2"><path d="M1 5l3.500-3.500L8 5" /></svg></div>
      <div className="w-[14px] h-[17px] bg-[#cdcdcd] mr-[2px]" />
      <div className="flex-1" />
      <div className="h-[18px] flex items-center"><svg width="9" height="6" viewBox="0 0 9 6" fill="none" stroke="#555" strokeWidth="2"><path d="M1 1l3.500 3.500L8 1" /></svg></div>
    </div>
  );
}

function LayoutTabs() {
  return (
    <div className="relative h-[16px] bg-[#f0f0f0] flex items-center shrink-0 text-[12px] [font-family:'Noto_Sans_CJK_SC',sans-serif]">
      <div className="w-[56px] ml-[1px] h-[14px] flex bg-[#dedede]">
        {['M2 1v10M9 1L4 6l5 5', 'M8 1L3 6l5 5', 'M3 1l5 5-5 5', 'M2 1l5 5-5 5M9 1v10'].map((d) => (
          <div key={d} className="w-[14px] flex justify-center items-center border-r border-[#f8f8f8]">
            <svg width="10" height="12" viewBox="0 0 10 12" fill="#777" stroke="#777"><path d={d} /></svg>
          </div>
        ))}
      </div>
      <div className="w-[42px] h-[14px] ml-[2px] bg-black text-white text-center leading-[14px] [clip-path:polygon(14%_0,100%_0,86%_100%,0_100%)]">模型</div>
      <div className="w-[47px] pl-[6px] text-[#333] leading-[15px] whitespace-nowrap">布局1</div>
      <div className="w-[47px] pl-[6px] text-[#333] leading-[15px] whitespace-nowrap">布局2</div>
      <svg className="absolute left-[100px] top-0" width="100" height="16" viewBox="0 0 100 16" fill="none" stroke="#666"><path d="M0 14.500H89M43 14.500L49 1M89 14.500L95 1" /></svg>
      <div className="absolute left-[540px] top-[3px]"><svg width="6" height="10" viewBox="0 0 6 10" fill="none" stroke="#444" strokeWidth="1.500"><path d="M5 1L1 5l4 4" /></svg></div>
      <div className="absolute left-[650px] top-0 w-[17px] h-[16px] bg-[#cdcdcd]" />
      <div className="absolute left-[798px] top-[3px]"><svg width="6" height="10" viewBox="0 0 6 10" fill="none" stroke="#555" strokeWidth="2"><path d="M1 1l4 4-4 4" /></svg></div>
    </div>
  );
}

function DocTabs() {
  return (
    <div className="relative h-[21px] bg-[#f0f0f0] border-t-2 border-black flex items-center shrink-0 text-[8.500px] [font-family:'DejaVu_Sans',sans-serif]">
      <svg className="absolute left-[36px] top-[-1px]" width="280" height="21" viewBox="0 0 280 21" fill="none" stroke="#111">
        <path d="M88 0l8 20h79l9-20z" fill="#fff" stroke="none" />
        <path d="M1 1l8 19M88 1l8 19M91 20l5-5M175 20l9-19M262 20l9-19" />
      </svg>
      <div className="relative flex h-[16px] ml-0 border border-[#888] bg-[#eee]">
        <div className="w-[17px] flex justify-center items-center border-r border-[#999]"><svg width="6" height="8" viewBox="0 0 6 8"><path d="M5 0v8L0 4z" fill="#111" /></svg></div>
        <div className="w-[16px] flex justify-center items-center"><svg width="6" height="8" viewBox="0 0 6 8"><path d="M1 0v8l5-4z" fill="#111" /></svg></div>
      </div>
      <span className="relative ml-[19px] w-[82px] text-[#555]">Drawing1.dwg</span>
      <span className="relative w-[92px] font-bold text-[9px] text-[#111]">Drawing1.dwg</span>
      <span className="relative text-[#555]">Drawing2.dwg</span>
    </div>
  );
}

function TbCell({ n, text, w = 'w-[23px]' }: { n?: string; text?: string; w?: string }) {
  return (
    <div className={`${w} flex justify-center items-center shrink-0`}>
      {n && <Ico n={n} />}
      {text && <span className="text-[#2a62c8] text-[13px] [font-family:'Liberation_Sans',sans-serif]">{text}</span>}
    </div>
  );
}

function BottomToolbars() {
  const row1 = ['h-up', 'h-down', 'h-right', 'h-left'];
  const row2 = ['lock', 'folder', 'camera', 'flag1', 'flag2', 'ptbox'];
  const row3 = ['note', 'walk', 'rainbow', 'yel', 'bulb', 'yel2', 'yel3', 'laylock', 'laypen', 'layswap', 'layp', 'laysun', 'layx', 'layx2'];
  const row4 = ['bq', 'b1', 'b2', 'b3', 'b4', 'b5', 'b6', 'b7', 'b8', 'b9'];
  return (
    <div className="flex-1 bg-[#696969]">
      <div className="pt-[4px] flex">
        <div className="h-[23px] flex items-center bg-[#f0f0f0] border-r border-b border-[#333]">
          <Handle />
          <div className="w-[2px]" />
          {row1.map((k) => (
            <div key={k} className="w-[23px] flex justify-center"><svg width="18" height="18" viewBox="0 0 18 18" fill="none">{handArrow(k.slice(2))}</svg></div>
          ))}
          {row1.map((k) => (
            <div key={k + 'b'} className="w-[23px] flex justify-center"><svg width="18" height="18" viewBox="0 0 18 18" fill="none">{handArrow(k.slice(2), true)}</svg></div>
          ))}
          <TbCell n="zoompt" />
          <div className="w-[1px]" />
        </div>
      </div>
      <div className="pt-[4px] flex items-start">
        <div className="h-[23px] flex items-center bg-[#f0f0f0] border-r border-b border-[#333]">
          <Handle />
          <div className="w-[2px]" />
          {row2.map((k) => <TbCell key={k} n={k} />)}
          {['P1', 'P2', 'P3', 'P4'].map((t) => <TbCell key={t} text={t} />)}
          <div className="w-[1px]" />
        </div>
        <div className="w-[2px]" />
        <div className="h-[23px] flex items-center bg-[#f0f0f0] border-r border-b border-[#333] flex-1 min-w-0 overflow-hidden">
          <Handle />
          <div className="w-[4px]" />
          {row3.map((k) => <TbCell key={k} n={k} />)}
          <Handle />
          <div className="w-[4px]" />
          {row4.map((k) => <TbCell key={k} n={k} />)}
        </div>
      </div>
    </div>
  );
}

const COL1_A = ['brush', 'copy', 'mirror', 'offset', 'array', 'move', 'rotate', 'scale', 'stretch', 'trim', 'extend', 'brk1', 'brk2', 'join', 'chamfer', 'fillet', 'blend', 'explode'];
const COL1_B = ['ovl1', 'ovl2', 'ovl3', 'ovl4'];
const COL2 = ['side', 'side2', 'split', 'frame', 'table', 'image', 'greenv', 'select', 'hatchc', 'pencurve', 'hatchp', 'flagc', 'dimp', 'bigA', 'notes', 'wrench', 'kit', 'select', 'stack'];

function SideBox({ children, className = '' }: { children: React.ReactNode; className?: string }) {
  return <div className={`w-[24px] bg-[#f0f0f0] border-x border-b border-[#333] flex flex-col items-center shrink-0 ${className}`}>{children}</div>;
}

function GripTop() {
  return (
    <div className="w-full h-[7px] bg-[#5f5f5f] flex justify-center items-center">
      <div className="w-[13px] h-[2px] border-t-2 border-dotted border-[#222]" />
    </div>
  );
}

function Cell22({ n }: { n: string }) {
  return <div className="h-[22px] flex items-center justify-center"><Ico n={n} /></div>;
}

function RightDocks() {
  return (
    <div className="w-[65px] bg-[#696969] flex pl-[5px] gap-[3px] shrink-0">
      <div className="flex flex-col gap-[1px]">
        <SideBox>
          <GripTop />
          {COL1_A.map((n) => <Cell22 key={n} n={n} />)}
        </SideBox>
        <SideBox>
          <GripTop />
          <div className="h-[1px]" />
          {COL1_B.map((n) => <Cell22 key={n} n={n} />)}
          <div className="w-[18px] h-[2px] my-[2px] border-t border-[#aaa]" />
          <Cell22 n="abc" />
          <Cell22 n="wipe" />
        </SideBox>
      </div>
      <SideBox className="self-start">
        <GripTop />
        {COL2.map((n, i) => <Cell22 key={n + i} n={n} />)}
      </SideBox>
      <div className="w-[7px] ml-[1px] h-[586px] bg-[#f0f0f0] flex flex-col pt-[9px] gap-[14px] overflow-hidden">
        {Array.from({ length: 26 }, (_, i) => (
          <div key={i} className="w-[4px] h-[8px] ml-[3px] bg-[#c98a2a]" />
        ))}
      </div>
    </div>
  );
}

const LEFT_ICONS = ['cloud', 'spline', 'ellipse', 'earc', 'block', 'rcirc', 'point', 'hatch', 'gradient', 'region', 'tbl', 'A', 'addsel'];

function LeftRail() {
  return (
    <div className="w-[56px] flex shrink-0 bg-[#696969]">
      <div className="w-[23px] ml-[2px] border-r border-[#555] bg-gradient-to-r from-[#707070] via-[#9a9a9a] to-[#808080] relative shrink-0">
        <div className="absolute left-[1px] top-[296px] h-[52px] flex items-center [writing-mode:vertical-rl] rotate-180 text-[13px] text-[#ddd] [font-family:'Liberation_Sans',sans-serif]">FastDWG</div>
      </div>
      <div className="w-[26px] ml-[1px] h-[448px] bg-[#f0f0f0] border-x border-b border-[#333] flex flex-col items-center pt-[161px] shrink-0">
        {LEFT_ICONS.map((n) => <Cell22 key={n} n={n} />)}
      </div>
    </div>
  );
}

function CommandArea() {
  return (
    <div className="h-[58px] flex shrink-0 bg-[#696969]">
      <div className="w-[23px] ml-[2px] h-[52px] bg-gradient-to-r from-[#707070] via-[#9a9a9a] to-[#808080] border-r border-[#555] shrink-0" />
      <div className="w-[1px]" />
      <div className="w-[17px] bg-[#a5a5a5] rounded-l-[3px] shrink-0 pt-[3px] pl-[2px]">
        <div className="w-[12px] h-[2px] border-t-2 border-dotted border-[#333]" />
      </div>
      <div className="flex-1 bg-white text-[14px] tracking-[1.700px] text-[#111] [font-family:'Noto_Sans_CJK_SC',sans-serif] flex flex-col">
        <div className="pl-[1px] h-[39px] border-b border-[#aaa]">
          <div className="h-[15px] leading-[15px]">命令:</div>
          <div className="h-[15px] leading-[15px]">命令:</div>
        </div>
        <div className="pl-[1px] leading-[18px]">拾取属性或属性块&lt;退出&gt;:</div>
      </div>
    </div>
  );
}

const STATUS_A = ['snap', 'dots', 'sgrid', 'ortho', 'polar', 'osnap', 'cube', 'angle', 'dyn', 'tplus', 'plus'];

function StatusBar() {
  return (
    <div className="h-[16px] bg-gradient-to-b from-[#7c7c7c] to-[#a8a8a8] border-t-2 border-[#222] flex items-start overflow-hidden shrink-0">
      <div className="w-[123px] pl-[12px] pt-[3px] text-[12px] leading-[14px] text-[#222] [font-family:'Liberation_Sans',sans-serif]">45173, 20656, 0</div>
      {STATUS_A.map((n) => (
        <div key={n} className="w-[22px] h-[16px] bg-gradient-to-b from-[#f0f7f9] to-[#9ecad8] border-r border-[#5c6b70] flex justify-center pt-px"><Ico n={n} size={16} /></div>
      ))}
      <div className="w-[23px] h-[16px] flex justify-center"><Ico n="check" size={16} /></div>
      <div className="w-[21px] h-[16px] bg-gradient-to-b from-[#f0f7f9] to-[#9ecad8] border-r border-[#5c6b70] flex justify-center pt-px"><Ico n="sheet" size={16} /></div>
      <div className="w-[21px] h-[16px] bg-gradient-to-b from-[#f0f7f9] to-[#9ecad8] border-r border-[#5c6b70] flex justify-center pt-px"><Ico n="plusg" size={16} /></div>
      <div className="w-[251px]" />
      <div className="w-[17px] h-[16px] bg-[#e8e8e8] border-x border-[#666] flex justify-center pt-px"><Ico n="paper" size={14} /></div>
      <div className="w-[20px] h-[16px] bg-[#e8e8e8] border-r border-[#666] flex justify-center pt-px"><Ico n="view2" size={16} /></div>
      <div className="w-[20px] h-[16px] border-r border-[#666]" />
      <div className="w-[20px] pl-[2px]"><Ico n="anno" size={16} /></div>
      <div className="w-[21px] text-[12px] leading-[15px] text-[#111] [font-family:'Liberation_Sans',sans-serif] whitespace-nowrap">1:1</div>
      <svg className="mt-[4px]" width="8" height="5" viewBox="0 0 8 5"><path d="M0 0h8L4 5z" fill="#111" /></svg>
      <div className="w-[6px] h-[16px] border-r border-[#666]" />
      <div className="w-[20px] pl-[2px]"><Ico n="anno2" size={16} /></div>
      <div className="w-[20px] pl-[2px]"><Ico n="anno3" size={16} /></div>
      <div className="w-[12px] h-[16px]" />
      <div className="w-[20px]"><Ico n="gear" size={16} /></div>
      <div className="w-[20px]"><Ico n="lock2" size={16} /></div>
      <div className="w-[22px] pl-[2px]"><Ico n="hw" size={16} /></div>
      <div className="w-[10px]" />
      <div className="w-[18px]"><Ico n="iso" size={16} /></div>
      <Ico n="bulby" size={16} />
    </div>
  );
}

function Field({ value = '', className }: { value?: string; className: string }) {
  return <input readOnly value={value} className={`h-[18px] bg-white border border-[#7a7a7a] pl-[2px] text-[12px] text-black outline-none ${className}`} />;
}

function SortSelect({ value }: { value: string }) {
  return (
    <div className="w-[64px] h-[21px] bg-white border border-[#7a7a7a] flex items-center pl-[3px] pr-[4px] justify-between">
      <span className="whitespace-nowrap">{value}</span>
      <Chevron color="#444" />
    </div>
  );
}

function WinButton({ label, className }: { label: string; className: string }) {
  return <div className={`w-[54px] h-[22px] bg-[#e1e1e1] border border-[#adadad] flex items-center justify-center ${className}`}>{label}</div>;
}

function NumberDialog() {
  return (
    <div className="absolute left-0 top-0 w-[284px] h-[246px] bg-[#f0f0f0] flex flex-col text-[12px] text-[#111] [font-family:'Noto_Sans_CJK_SC',sans-serif]">
      <div className="h-[22px] bg-white flex justify-between shrink-0">
        <span className="text-[12px] leading-[18px] text-[#9aa] pl-0">属性编号</span>
        <div className="w-[19px] h-[18px] bg-[#e6e6e6] mr-px flex items-center justify-center">
          <svg width="6" height="6" viewBox="0 0 6 6" stroke="#fff"><path d="M.5.5l5 5M5.500.5l-5 5" /></svg>
        </div>
      </div>
      <div className="flex gap-[10px] pl-[2px] pt-[8px]">
        <fieldset className="w-[128px] h-[135px] border border-[#dcdcdc]">
          <legend className="ml-[7px] px-px leading-[14px]">文字选项</legend>
          <div className="pl-[15px] pt-[8px] flex flex-col gap-[3px]">
            {[['前缀', ''], ['后缀', ''], ['起始', '1'], ['递增', '1'], ['长度', '1']].map(([l, v]) => (
              <div key={l} className="flex items-center h-[18px]">
                <span className="w-[39px]">{l}</span>
                <Field value={v} className="w-[57px]" />
              </div>
            ))}
          </div>
        </fieldset>
        <fieldset className="w-[136px] h-[134px] border border-[#dcdcdc]">
          <legend className="ml-[7px] px-px leading-[14px]">排序选项</legend>
          <div className="pl-[12px] pt-[6px] flex flex-col gap-[6px]">
            {[['X排序', '左->右'], ['Y排序', '上->下'], ['优先', '行']].map(([l, v]) => (
              <div key={l} className="flex items-center">
                <span className="w-[43px]">{l}</span>
                <SortSelect value={v} />
              </div>
            ))}
            <div className="flex items-center mt-[5px]">
              <span className="w-[43px]">行精度</span>
              <Field value="10" className="w-[32px]" />
            </div>
          </div>
        </fieldset>
      </div>
      <div className="flex items-center pl-[4px] mt-[10px]">
        <span className="w-[56px]">排序标签</span>
        <Field className="w-[136px] !h-[20px]" />
        <WinButton label="拾取 >>" className="ml-[17px] !w-[60px]" />
      </div>
      <div className="flex mt-[19px] pl-[79px] gap-[22px]">
        <WinButton label="应用" className="" />
        <WinButton label="退出" className="" />
      </div>
    </div>
  );
}

function TagDialog() {
  const items = ['图号', '阶段', '比例', '日期', '工程名称', '图名', '审定人', '专业负责', '审核人'];
  return (
    <div className="absolute left-[390px] top-[278px] w-[234px] h-[202px] bg-[#f0f0f0] border border-[#2b7bc0] flex flex-col text-[12px] text-[#111] [font-family:'Noto_Sans_CJK_SC',sans-serif]">
      <div className="h-[25px] bg-white flex items-center justify-between pl-[3px] pr-[9px] pb-[4px] shrink-0">
        <span>标签列表</span>
        <svg width="11" height="11" viewBox="0 0 11 11" stroke="#111"><path d="M.5.5l10 10M10.500.5l-10 10" /></svg>
      </div>
      <div className="ml-[16px] mt-[15px] w-[200px] h-[112px] bg-white border border-[#828790] flex overflow-hidden">
        <div className="flex-1 pt-px pl-px overflow-hidden">
          {items.map((t, i) => (
            <div key={t} className={`h-[13px] leading-[13px] pl-[1px] whitespace-nowrap ${i === 0 ? 'bg-[#0078d7] text-white' : 'text-black'}`}>{t}</div>
          ))}
        </div>
        <div className="w-[17px] bg-[#f0f0f0] flex flex-col items-center shrink-0">
          <div className="h-[18px] flex items-center"><svg width="8" height="5" viewBox="0 0 8 5" fill="none" stroke="#555" strokeWidth="2"><path d="M1 4l3-3 3 3" /></svg></div>
          <div className="w-[15px] h-[46px] bg-[#cdcdcd]" />
          <div className="flex-1" />
          <div className="h-[18px] flex items-center"><svg width="8" height="5" viewBox="0 0 8 5" fill="none" stroke="#555" strokeWidth="2"><path d="M1 1l3 3 3-3" /></svg></div>
        </div>
      </div>
      <div className="flex mt-[17px] pl-[56px] gap-[17px]">
        <WinButton label="确定" className="" />
        <WinButton label="取消" className="" />
      </div>
      <svg className="absolute left-[179px] top-[50px]" width="13" height="20" viewBox="0 0 13 20"><path d="M1 1v14l3.500-3 2.500 6 2.500-1-2.500-6h4.500z" fill="#fff" stroke="#111" /></svg>
    </div>
  );
}

export default function App() {
  return (
    <div className="relative w-[947px] h-[749px] overflow-hidden bg-[#696969] flex flex-col">
      <TitleBar />
      <ToolRow1 />
      <div className="h-[5px] shrink-0" />
      <ToolRow2 />
      <div className="h-[6px] shrink-0" />
      <div className="flex flex-1 min-h-0">
        <LeftRail />
        <div className="w-[826px] shrink-0 flex flex-col">
          <div className="flex pl-px">
            <Canvas />
            <VScroll />
            <div className="w-[2px] bg-[#f0f0f0]" />
          </div>
          <LayoutTabs />
          <DocTabs />
          <BottomToolbars />
        </div>
        <RightDocks />
      </div>
      <CommandArea />
      <StatusBar />

      <NumberDialog />
      <TagDialog />

      <div className="absolute left-0 top-0 w-[8px] h-[36px] bg-[#4fb04f]/70" />
      <div className="absolute left-[8px] top-0 w-[32px] h-[4px] bg-[#4fb04f]/70" />
      <div className="absolute left-0 top-[715px] w-[8px] h-[34px] bg-[#3aa03a]/80" />
      <div className="absolute left-[8px] top-[747px] w-[32px] h-[2px] bg-[#3aa03a]/80" />

      <div className="absolute left-[842px] top-[698px] flex items-end whitespace-nowrap">
        <span className="text-[22px] leading-[30px] font-bold text-[#e6e6e6] [font-family:'Noto_Sans_CJK_SC',sans-serif]">晓东</span>
        <span className="ml-[5px] text-[19px] leading-[28px] italic text-[#dcdcdc] [font-family:'Liberation_Serif',serif]">CAD</span>
      </div>
      <div className="absolute left-[842px] top-[728px] text-[11px] leading-[13px] text-[#bbb]/70 [font-family:'Liberation_Sans',sans-serif] tracking-[.5px]">www.xdcad.net</div>
    </div>
  );
}
